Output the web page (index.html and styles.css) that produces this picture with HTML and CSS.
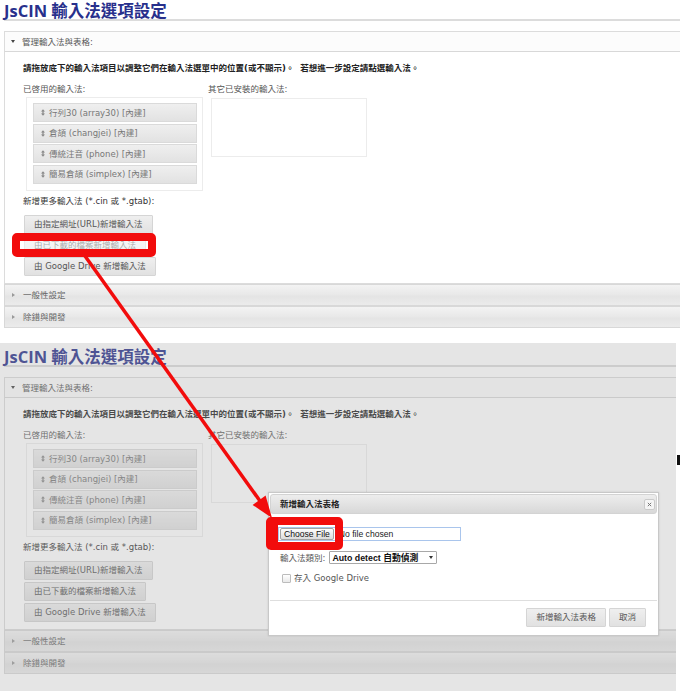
FILE: index.html
```html
<!DOCTYPE html>
<html lang="zh-Hant">
<head>
  <meta charset="UTF-8">
  <title>JsCIN 輸入法選項設定</title>
  <link rel="stylesheet" href="styles.css">
</head>
<body>
<div class="sheet">

  <!-- first capture: options page -->
  <div class="shot shot-top">
    <div class="page">
      <h1 class="title">JsCIN 輸入法選項設定</h1>
      <div class="acc">
        <div class="acc-head open"><span class="tri-down"></span>管理輸入法與表格:</div>
        <div class="acc-body">
          <p class="hint">請拖放底下的輸入法項目以調整它們在輸入法選單中的位置(或不顯示)。&nbsp;&nbsp;若想進一步設定請點選輸入法。</p>
          <div class="lists">
            <div class="col col-on">
              <div class="lbl">已啓用的輸入法:</div>
              <ul class="ime-list">
                <li><svg class="grip" viewBox="0 0 5 8"><path d="M2.5 0L5 2.6H3.3v2.8H5L2.5 8 0 5.4h1.7V2.6H0z"/></svg>行列30 (array30) [內建]</li>
                <li><svg class="grip" viewBox="0 0 5 8"><path d="M2.5 0L5 2.6H3.3v2.8H5L2.5 8 0 5.4h1.7V2.6H0z"/></svg>倉頡 (changjei) [內建]</li>
                <li><svg class="grip" viewBox="0 0 5 8"><path d="M2.5 0L5 2.6H3.3v2.8H5L2.5 8 0 5.4h1.7V2.6H0z"/></svg>傳統注音 (phone) [內建]</li>
                <li><svg class="grip" viewBox="0 0 5 8"><path d="M2.5 0L5 2.6H3.3v2.8H5L2.5 8 0 5.4h1.7V2.6H0z"/></svg>簡易倉頡 (simplex) [內建]</li>
              </ul>
            </div>
            <div class="col">
              <div class="lbl">其它已安裝的輸入法:</div>
              <div class="ime-box"></div>
            </div>
          </div>
          <div class="lbl add-lbl">新增更多輸入法 (*.cin 或 *.gtab):</div>
          <div class="btns">
            <span class="btn">由指定網址(URL)新增輸入法</span>
            <span class="btn">由已下載的檔案新增輸入法</span>
            <span class="btn">由 Google Drive 新增輸入法</span>
          </div>
        </div>
        <div class="acc-head shut"><span class="tri-right"></span>一般性設定</div>
        <div class="acc-head shut"><span class="tri-right"></span>除錯與開發</div>
      </div>
    </div>
  </div>

  <!-- second capture: same page with the upload dialog open -->
  <div class="shot-row">
    <div class="shot shot-bottom">
      <div class="page">
        <h1 class="title">JsCIN 輸入法選項設定</h1>
        <div class="acc">
          <div class="acc-head open"><span class="tri-down"></span>管理輸入法與表格:</div>
          <div class="acc-body">
            <p class="hint">請拖放底下的輸入法項目以調整它們在輸入法選單中的位置(或不顯示)。&nbsp;&nbsp;若想進一步設定請點選輸入法。</p>
            <div class="lists">
              <div class="col col-on">
                <div class="lbl">已啓用的輸入法:</div>
                <ul class="ime-list">
                  <li><svg class="grip" viewBox="0 0 5 8"><path d="M2.5 0L5 2.6H3.3v2.8H5L2.5 8 0 5.4h1.7V2.6H0z"/></svg>行列30 (array30) [內建]</li>
                  <li><svg class="grip" viewBox="0 0 5 8"><path d="M2.5 0L5 2.6H3.3v2.8H5L2.5 8 0 5.4h1.7V2.6H0z"/></svg>倉頡 (changjei) [內建]</li>
                  <li><svg class="grip" viewBox="0 0 5 8"><path d="M2.5 0L5 2.6H3.3v2.8H5L2.5 8 0 5.4h1.7V2.6H0z"/></svg>傳統注音 (phone) [內建]</li>
                  <li><svg class="grip" viewBox="0 0 5 8"><path d="M2.5 0L5 2.6H3.3v2.8H5L2.5 8 0 5.4h1.7V2.6H0z"/></svg>簡易倉頡 (simplex) [內建]</li>
                </ul>
              </div>
              <div class="col">
                <div class="lbl">其它已安裝的輸入法:</div>
                <div class="ime-box"></div>
              </div>
            </div>
            <div class="lbl add-lbl">新增更多輸入法 (*.cin 或 *.gtab):</div>
            <div class="btns">
              <span class="btn">由指定網址(URL)新增輸入法</span>
              <span class="btn">由已下載的檔案新增輸入法</span>
              <span class="btn">由 Google Drive 新增輸入法</span>
            </div>
          </div>
          <div class="acc-head shut"><span class="tri-right"></span>一般性設定</div>
          <div class="acc-head shut"><span class="tri-right"></span>除錯與開發</div>
        </div>
      </div>
      <div class="dim"></div>

      <div class="dialog">
        <div class="dlg-head">
          <span>新增輸入法表格</span>
          <span class="dlg-x"><svg viewBox="0 0 6 6"><path d="M1 1l4 4M5 1L1 5"/></svg></span>
        </div>
        <div class="dlg-body">
          <div class="file-input"><span class="file-btn">Choose File</span><span class="file-name">No file chosen</span></div>
          <div class="sel-row">
            <span>輸入法類別:</span>
            <span class="sel">Auto detect 自動偵測<span class="sel-caret"></span></span>
          </div>
          <div class="chk-row"><span class="chk"></span>存入 Google Drive</div>
        </div>
        <div class="dlg-foot">
          <span class="btn">新增輸入法表格</span>
          <span class="btn">取消</span>
        </div>
      </div>
    </div>
    <div class="edge"><span class="edge-mark"></span></div>
  </div>

  <!-- annotation drawn over both captures -->
  <div class="marks">
    <div class="hl hl-url"></div>
    <div class="hl hl-file"></div>
    <svg class="arrow" viewBox="0 0 680 691">
      <line x1="85" y1="256" x2="260" y2="501"/>
      <polygon points="272,518 252.6,504.9 265.6,495.5"/>
    </svg>
  </div>

</div>
</body>
</html>
```

FILE: styles.css
```css
* { box-sizing: border-box; }
body { margin: 0; background: #fff; }
.sheet { position: relative; width: 680px; height: 691px; overflow: hidden; }

/* the two captures */
.shot { position: relative; overflow: hidden; background: #fff; }
.shot-top { height: 343px; }
.shot-row { display: flex; height: 348px; }
.shot-bottom { width: 676px; padding-top: 3px; }
.edge { width: 4px; background: #fff; }
.edge-mark { display: block; width: 3px; height: 10px; margin: 112px 0 0 1px; background: #111; }
.dim { position: absolute; inset: 0; background: rgba(170, 170, 170, 0.3); }

/* options page */
.page { font-family: "DejaVu Sans", "Noto Sans CJK TC", sans-serif; font-size: 8.5px; line-height: 12px; color: #555; }
.title { margin: 3px 0 0 4px; font-family: "Open Sans", "Noto Sans CJK TC", sans-serif; font-size: 16.5px; font-weight: 700; line-height: 16px; color: #28308c; border-bottom: 2px solid #dcdcdc; }
.acc { width: 720px; margin: 10px 0 0 4px; }
.acc-head { display: flex; align-items: center; height: 21px; padding-left: 6px; border: 1px solid #dcdcdc; }
.acc-head.open { background: #fcfcfc; border-bottom-color: #d8d8d8; }
.acc-head.shut { height: 22px; color: #666; background: linear-gradient(#f3f3f3, #e8e8e8 50%, #e4e4e4 55%, #ebebeb); border-color: #d8d8d8; }
.tri-down { width: 0; height: 0; margin-right: 7px; border-top: 3px solid #444; border-left: 2.5px solid transparent; border-right: 2.5px solid transparent; }
.tri-right { width: 0; height: 0; margin: 0 8px 0 1px; border-left: 3px solid #999; border-top: 2px solid transparent; border-bottom: 2px solid transparent; }
.acc-body { padding: 10px 0 7px 18px; border: 1px solid #dcdcdc; border-top: 0; background: #fff; }
.hint { margin: 0; font-weight: bold; color: #222; }
.lists { display: flex; margin-top: 9px; }
.col-on { width: 185px; }
.ime-list { list-style: none; width: 177px; margin: 2px 0 0 3px; padding: 5px 5px 6px 6px; border: 1px solid #ececec; }
.ime-list li { display: flex; align-items: center; gap: 4px; height: 19px; margin-top: 1.5px; padding-left: 7px; color: #777; border: 1px solid #dadada; background: linear-gradient(#efefef, #e2e2e2); }
.ime-list li:first-child { margin-top: 0; }
.grip { flex: none; width: 4px; height: 7px; fill: #8a8a8a; }
.ime-box { width: 156px; height: 59px; margin: 3px 0 0 3px; border: 1px solid #ececec; }
.add-lbl { margin-top: 4px; color: #333; }
.btns { display: flex; flex-direction: column; align-items: flex-start; gap: 2px; margin: 8.5px 0 0 1px; }
.btn { display: block; height: 19px; line-height: 17px; padding: 0 9px; color: #555; border: 1px solid #d5d5d5; border-radius: 1px; background: linear-gradient(#efefef, #e1e1e1); }

/* upload dialog */
.dialog { position: absolute; left: 268px; top: 149px; display: flex; flex-direction: column; width: 391px; height: 144px; padding: 1px; border: 1px solid #c8c8c8; background: #fff; box-shadow: 0 0 2px rgba(0, 0, 0, 0.12);
  font-family: "DejaVu Sans", "Noto Sans CJK TC", sans-serif; font-size: 8.5px; line-height: 12px; color: #555; }
.dlg-head { display: flex; align-items: center; justify-content: space-between; height: 20px; padding: 0 1px 0 9px; font-weight: bold; color: #222; border: 1px solid #d3d3d3; border-radius: 3px; background: linear-gradient(#ededed, #d8d8d8); }
.dlg-x { display: flex; align-items: center; justify-content: center; width: 11px; height: 11px; border: 1px solid #cacaca; border-radius: 2px; background: #f5f5f5; }
.dlg-x svg { width: 5px; height: 5px; stroke: #777; stroke-width: 1.2; }
.dlg-body { flex: 1; padding: 13px 0 0 10px; }
.file-input { display: flex; align-items: center; gap: 5px; width: 183px; height: 14px; margin-left: -2px; padding-left: 1px; border: 1px solid #a9c5ec; font-family: "Liberation Sans", Arial, sans-serif; font-size: 8.6px; color: #222; }
.file-btn { height: 12px; line-height: 10px; padding: 0 3px; color: #111; border: 1px solid #a3a3a3; border-radius: 2px; background: linear-gradient(#fdfdfd, #dcdcdc); }
.sel-row { display: flex; align-items: center; gap: 4px; margin-top: 10px; }
.sel { display: flex; align-items: center; justify-content: space-between; width: 108px; height: 13px; padding: 0 3px 0 2px; font-family: "Liberation Sans", "Noto Sans CJK TC", sans-serif; font-size: 8.8px; font-weight: bold; color: #111; border: 1px solid #a8a8a8; border-radius: 1px; background: #fff; }
.sel-caret { width: 0; height: 0; border-top: 3px solid #333; border-left: 2px solid transparent; border-right: 2px solid transparent; }
.chk-row { display: flex; align-items: center; gap: 3px; margin: 8px 0 0 2px; }
.chk { width: 9px; height: 9px; border: 1px solid #bcbcbc; border-radius: 1px; background: linear-gradient(#fff, #e9e9e9); }
.dlg-foot { display: flex; justify-content: flex-end; gap: 3px; padding: 7px 11px 7px 0; border-top: 1px solid #dedede; }

/* red annotation */
.marks { position: absolute; inset: 0; pointer-events: none; }
.hl { position: absolute; border: 8px solid #f20c0c; border-radius: 5px; }
.hl-url { left: 12px; top: 233px; width: 144px; height: 24px; background: rgba(255, 255, 255, 0.5); }
.hl-file { left: 266px; top: 517px; width: 77px; height: 33px; border-left-width: 12px; }
.arrow { position: absolute; left: 0; top: 0; width: 680px; height: 691px; }
.arrow line { stroke: #f20c0c; stroke-width: 3.5; }
.arrow polygon { fill: #f20c0c; }
```
